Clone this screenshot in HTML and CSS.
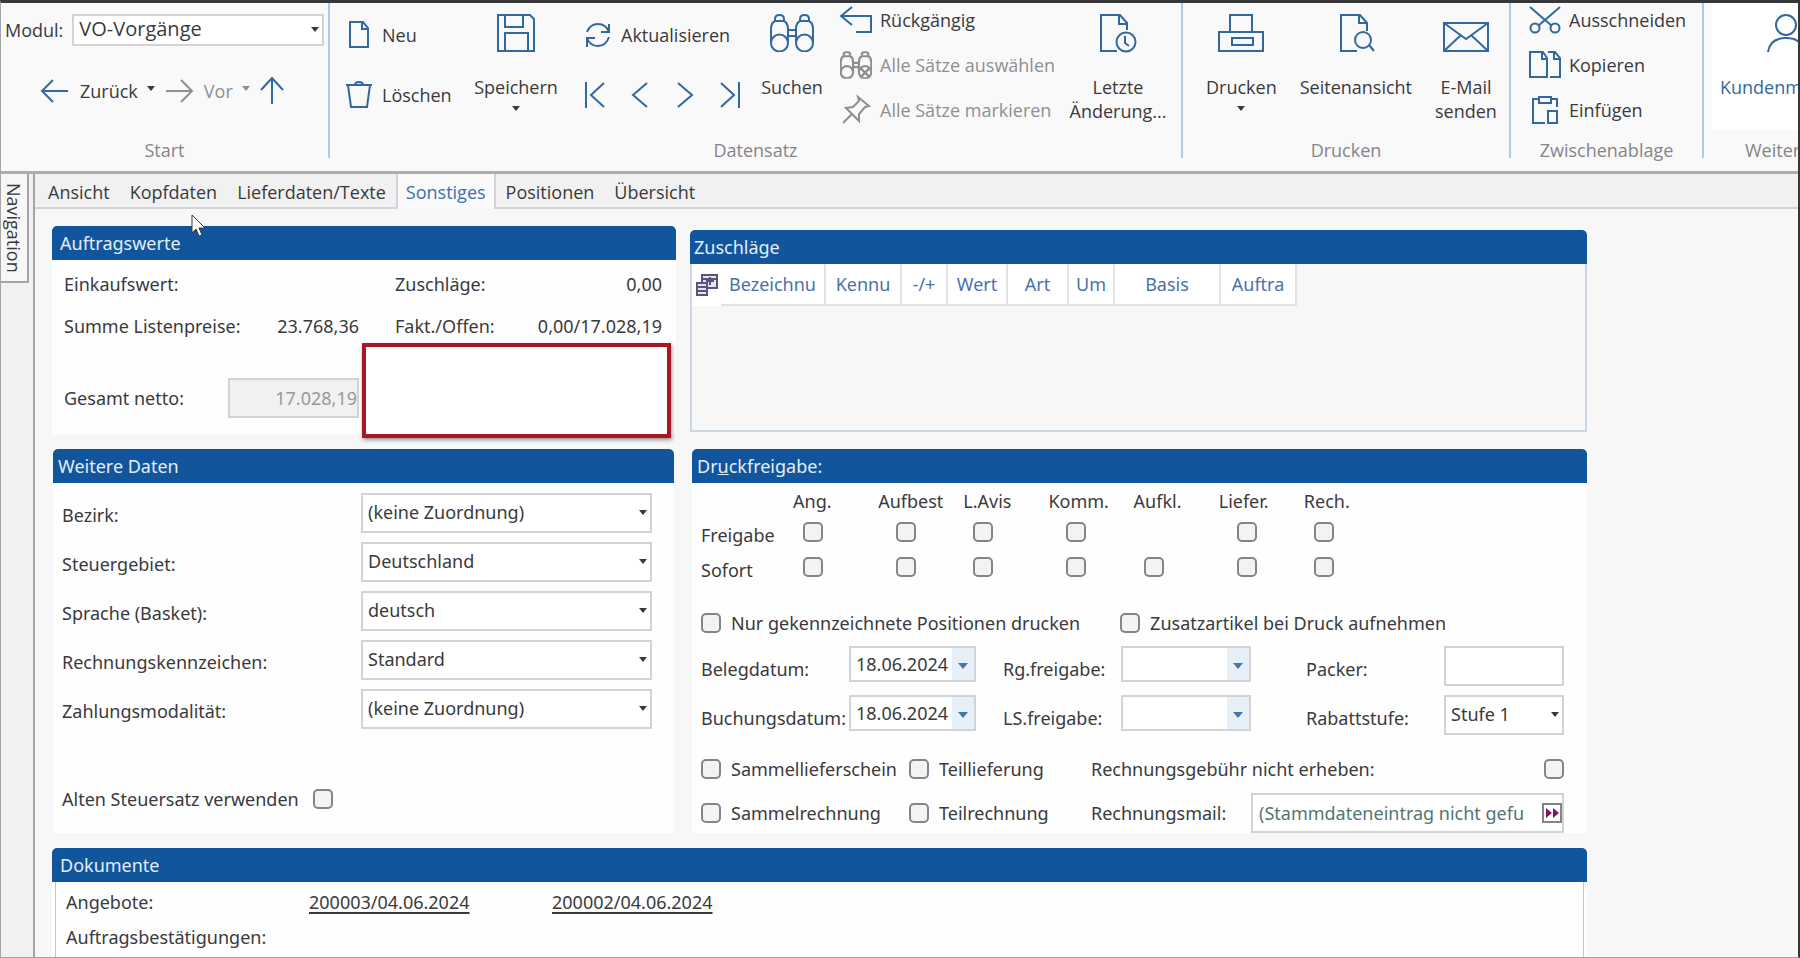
FILE: index.html
```html
<!DOCTYPE html>
<html lang="de">
<head>
<meta charset="utf-8">
<title>VO-Vorgänge</title>
<link rel="stylesheet" href="styles.css">
</head>
<body>
<svg class="defs" aria-hidden="true">
  <defs>
    <symbol id="binoculars" viewBox="0 0 44 38">
      <circle cx="9.500" cy="29" r="8.500"/><circle cx="34.500" cy="29" r="8.500"/>
      <path d="M1 28V15Q1 9 5 7h9q4 2 4 8v13M26 28V15q0-6 4-8h9q4 2 4 8v13M5 7V5q0-4 4.500-4T14 5v2M30 7V5q0-4 4.500-4T39 5v2M18 16h8M18 22h8"/>
    </symbol>
  </defs>
</svg>
<div class="window">
  <header class="ribbon">
    <section class="group group-start">
      <div class="group-body">
        <div class="module-row">
          <label for="modul">Modul:</label>
          <span class="combo"><select id="modul"><option>VO-Vorgänge</option></select></span>
        </div>
        <div class="history-row">
          <button class="tool"><svg width="28" height="24" viewBox="0 0 28 24"><path d="M27 12H1M12 1L1 12l11 11"/></svg>Zurück<i class="caret"></i></button>
          <button class="tool muted"><svg width="28" height="24" viewBox="0 0 28 24"><path d="M1 12h26M16 1l11 11-11 11"/></svg>Vor<i class="caret"></i></button>
          <button class="tool" aria-label="Nach oben"><svg width="24" height="28" viewBox="0 0 24 28"><path d="M12 27V1M1 13L12 1l11 12"/></svg></button>
        </div>
      </div>
      <h2 class="group-title">Start</h2>
    </section>

    <section class="group group-data">
      <div class="group-body">
        <div class="stack new-delete">
          <button class="tool"><svg width="26" height="28" viewBox="0 0 26 28"><path d="M4 1h13l5 6v19H4zM16 1v7h6"/></svg>Neu</button>
          <button class="tool"><svg width="26" height="28" viewBox="0 0 26 28"><path d="M0 4h26M9 4q0-3 4-3t4 3M2 4l3 22h16l3-22"/></svg>Löschen</button>
        </div>
        <button class="big save"><svg width="38" height="38" viewBox="0 0 38 38"><path d="M1 1h32l4 4v32H1zM8 1v12h18V1M8 37V19h23v18M8 19v18"/></svg><span>Speichern</span><i class="caret"></i></button>
        <div class="stack refresh-nav">
          <button class="tool"><svg width="26" height="28" viewBox="0 0 26 28"><path d="M2 11Q5 3 13 3t11 8M24 3v8h-8M24 16q-3 9-11 9T2 17M2 26v-9h8"/></svg>Aktualisieren</button>
          <div class="record-nav">
            <button class="tool" aria-label="Erster"><svg width="20" height="28" viewBox="0 0 20 28"><path d="M1 1v26M19 2L6 14l13 12"/></svg></button>
            <button class="tool" aria-label="Voriger"><svg width="20" height="28" viewBox="0 0 20 28"><path d="M17 2L3 14l14 12"/></svg></button>
            <button class="tool" aria-label="Nächster"><svg width="20" height="28" viewBox="0 0 20 28"><path d="M3 2l14 12L3 26"/></svg></button>
            <button class="tool" aria-label="Letzter"><svg width="20" height="28" viewBox="0 0 20 28"><path d="M1 2l13 12L1 26M19 1v26"/></svg></button>
          </div>
        </div>
        <button class="big search"><svg width="44" height="38"><use href="#binoculars"/></svg><span>Suchen</span></button>
        <div class="triple">
          <button class="tool"><svg width="32" height="28" viewBox="0 0 32 28"><path d="M12 1L1 10l11 9M1 10h30v16H16"/></svg>Rückgängig</button>
          <button class="tool muted"><svg width="32" height="28" viewBox="0 0 44 38" class="heavy"><use href="#binoculars"/><path d="M29 24l11 11M40 24L29 35"/></svg>Alle Sätze auswählen</button>
          <button class="tool muted"><svg width="32" height="28" viewBox="0 0 32 28"><path d="M18 1l11 9-4 1-6 7v7L6 12l7-1 6-6zM12 18l-9 9"/></svg>Alle Sätze markieren</button>
        </div>
        <button class="big last"><svg width="38" height="38" viewBox="0 0 38 38"><path d="M18 37H2V1h19l7 8v7M20 1v9h8"/><circle cx="27" cy="28" r="9.500"/><path d="M26 22v7l4 3"/></svg><span>Letzte<br>Änderung...</span></button>
      </div>
      <h2 class="group-title">Datensatz</h2>
    </section>

    <section class="group group-print">
      <div class="group-body">
        <button class="big"><svg width="46" height="38" viewBox="0 0 46 38"><path d="M1 18h44v19H1zM12 18V1h22v17M14 24h21v7H14z"/></svg><span>Drucken</span><i class="caret"></i></button>
        <button class="big"><svg width="38" height="38" viewBox="0 0 38 38"><path d="M20 37H4V1h19l7 8v8M22 1v8h8"/><circle cx="26" cy="26" r="8"/><path d="M32 31l5 6"/></svg><span>Seitenansicht</span></button>
        <button class="big"><svg width="46" height="38" viewBox="0 0 46 38"><path d="M1 9h44v28H1zM1 9l22 16L45 9M1 37l17-16M45 37L28 21"/></svg><span>E-Mail<br>senden</span></button>
      </div>
      <h2 class="group-title">Drucken</h2>
    </section>

    <section class="group group-clip">
      <div class="group-body">
        <div class="triple">
          <button class="tool"><svg width="32" height="28" viewBox="0 0 32 28"><path d="M1 1l22 19M31 1L9 20"/><circle cx="6" cy="22" r="4.500"/><circle cx="26" cy="22" r="4.500"/></svg>Ausschneiden</button>
          <button class="tool"><svg width="32" height="28" viewBox="0 0 32 28"><path d="M1 1h13l4 6v19H1zM13 1v7h5M19 1h7l5 6v19H21M25 1v7h6"/></svg>Kopieren</button>
          <button class="tool"><svg width="32" height="28" viewBox="0 0 32 28"><path d="M16 27H4V3h6M22 3h6v8M10 1h12v6H10zM19 15h9v12h-9z"/></svg>Einfügen</button>
        </div>
      </div>
      <h2 class="group-title">Zwischenablage</h2>
    </section>

    <section class="group group-more">
      <div class="group-body">
        <button class="big customer"><svg width="38" height="38" viewBox="0 0 38 38"><circle cx="19" cy="11" r="10"/><path d="M1 38Q3 24 19 24t18 14"/></svg><span>Kundenmonitor</span></button>
      </div>
      <h2 class="group-title">Weiteres</h2>
    </section>
  </header>

  <div class="workspace">
    <aside class="sidebar"><button class="nav-tab">Navigation</button></aside>
    <main class="content">
      <nav class="tabs">
        <a href="#ansicht">Ansicht</a>
        <a href="#kopfdaten">Kopfdaten</a>
        <a href="#lieferdaten">Lieferdaten/Texte</a>
        <a href="#sonstiges" class="active" aria-current="page">Sonstiges</a>
        <a href="#positionen">Positionen</a>
        <a href="#uebersicht">Übersicht</a>
      </nav>

      <div class="panels">
        <section class="panel values">
          <h2>Auftragswerte</h2>
          <div class="values-grid">
            <span>Einkaufswert:</span><span></span><span class="second">Zuschläge:</span><output>0,00</output>
            <span>Summe Listenpreise:</span><output>23.768,36</output><span class="second">Fakt./Offen:</span><output>0,00/17.028,19</output>
            <label for="netto">Gesamt netto:</label><input id="netto" class="net" value="17.028,19" disabled>
          </div>
          <div class="highlight"></div>
        </section>

        <section class="panel surcharges">
          <h2>Zuschläge</h2>
          <div class="surcharge-body">
            <table>
              <thead><tr>
                <th class="c-icon"><svg width="24" height="24" viewBox="0 0 24 24"><path class="sheet" d="M7 2h15v13H7z"/><path d="M7 6h15M15 4v8M11 8h8"/><path class="sheet" d="M2 10h10v12H2z"/><path d="M2 14h10M2 18h10"/></svg></th>
                <th class="c-name">Bezeichnu</th><th class="c-code">Kennu</th><th class="c-sign">-/+</th><th class="c-value">Wert</th><th class="c-kind">Art</th><th class="c-um">Um</th><th class="c-basis">Basis</th><th class="c-order">Auftra</th>
              </tr></thead>
            </table>
          </div>
        </section>

        <section class="panel details">
          <h2>Weitere Daten</h2>
          <div class="details-body">
            <div class="field"><label for="bezirk">Bezirk:</label><span class="combo"><select id="bezirk"><option>(keine Zuordnung)</option></select></span></div>
            <div class="field"><label for="gebiet">Steuergebiet:</label><span class="combo"><select id="gebiet"><option>Deutschland</option></select></span></div>
            <div class="field"><label for="sprache">Sprache (Basket):</label><span class="combo"><select id="sprache"><option>deutsch</option></select></span></div>
            <div class="field"><label for="kennz">Rechnungskennzeichen:</label><span class="combo"><select id="kennz"><option>Standard</option></select></span></div>
            <div class="field"><label for="zahlung">Zahlungsmodalität:</label><span class="combo"><select id="zahlung"><option>(keine Zuordnung)</option></select></span></div>
            <label class="check old-tax">Alten Steuersatz verwenden<input type="checkbox"></label>
          </div>
        </section>

        <section class="panel release">
          <h2>Dr<u>u</u>ckfreigabe:</h2>
          <div class="release-body">
            <table class="matrix">
              <thead><tr><td></td><th>Ang.</th><th>Aufbest</th><th>L.Avis</th><th>Komm.</th><th>Aufkl.</th><th>Liefer.</th><th>Rech.</th></tr></thead>
              <tbody>
                <tr><th>Freigabe</th><td><input type="checkbox" aria-label="Freigabe Ang."></td><td class="in"><input type="checkbox" aria-label="Freigabe Aufbest"></td><td><input type="checkbox" aria-label="Freigabe L.Avis"></td><td class="in"><input type="checkbox" aria-label="Freigabe Komm."></td><td></td><td class="in"><input type="checkbox" aria-label="Freigabe Liefer."></td><td><input type="checkbox" aria-label="Freigabe Rech."></td></tr>
                <tr><th>Sofort</th><td><input type="checkbox" aria-label="Sofort Ang."></td><td class="in"><input type="checkbox" aria-label="Sofort Aufbest"></td><td><input type="checkbox" aria-label="Sofort L.Avis"></td><td class="in"><input type="checkbox" aria-label="Sofort Komm."></td><td><input type="checkbox" aria-label="Sofort Aufkl."></td><td class="in"><input type="checkbox" aria-label="Sofort Liefer."></td><td><input type="checkbox" aria-label="Sofort Rech."></td></tr>
              </tbody>
            </table>
            <div class="print-options">
              <label class="check"><input type="checkbox">Nur gekennzeichnete Positionen drucken</label>
              <label class="check"><input type="checkbox">Zusatzartikel bei Druck aufnehmen</label>
            </div>
            <div class="dates">
              <label for="beleg">Belegdatum:</label>
              <span class="date"><input id="beleg" value="18.06.2024"><button aria-label="Kalender"><i class="caret"></i></button></span>
              <label for="rgfrei">Rg.freigabe:</label>
              <span class="date"><input id="rgfrei"><button aria-label="Kalender"><i class="caret"></i></button></span>
              <label for="packer">Packer:</label>
              <input id="packer" class="text">
              <label for="buchung">Buchungsdatum:</label>
              <span class="date"><input id="buchung" value="18.06.2024"><button aria-label="Kalender"><i class="caret"></i></button></span>
              <label for="lsfrei">LS.freigabe:</label>
              <span class="date"><input id="lsfrei"><button aria-label="Kalender"><i class="caret"></i></button></span>
              <label for="rabatt">Rabattstufe:</label>
              <span class="combo"><select id="rabatt"><option>Stufe 1</option></select></span>
            </div>
            <div class="invoice">
              <label class="check"><input type="checkbox">Sammellieferschein</label>
              <label class="check"><input type="checkbox">Teillieferung</label>
              <label class="check fee">Rechnungsgebühr nicht erheben:<input type="checkbox"></label>
              <label class="check"><input type="checkbox">Sammelrechnung</label>
              <label class="check"><input type="checkbox">Teilrechnung</label>
              <div class="mail">
                <label for="mail">Rechnungsmail:</label>
                <span class="mail-box"><input id="mail" value="(Stammdateneintrag nicht gefu"><button aria-label="Öffnen"><svg width="14" height="12" viewBox="0 0 14 12"><path d="M1 1l6 5-6 5zM8 1l6 5-6 5z"/></svg></button></span>
              </div>
            </div>
          </div>
        </section>

        <section class="panel documents">
          <h2>Dokumente</h2>
          <div class="documents-body">
            <span>Angebote:</span><a href="#200003">200003/04.06.2024</a><a href="#200002">200002/04.06.2024</a>
            <span class="row-start">Auftragsbestätigungen:</span>
          </div>
        </section>
      </div>
    </main>
  </div>
  <svg class="pointer" width="15" height="24" viewBox="0 0 15 24"><path d="M1 1v18l4-4 3 7 3-1-3-7h6z"/></svg>
</div>
</body>
</html>
```

FILE: styles.css
```css
* { box-sizing: border-box; }

body {
  margin: 0;
  font-family: "Open Sans", "Noto Sans", sans-serif;
  font-size: 18px;
  line-height: 24px;
  color: #3a3a3d;
  background: #f7f7f7;
}

button, input, select {
  font: inherit;
  color: inherit;
  margin: 0;
  padding: 0;
  border: 0;
  border-radius: 0;
  background: none;
  white-space: nowrap;
}

h2 { margin: 0; font-size: inherit; font-weight: 400; }
svg { fill: none; stroke: #33689f; stroke-width: 2; flex: none; overflow: visible; }
.defs { position: absolute; width: 0; height: 0; }

.window {
  position: relative;
  display: flex;
  flex-direction: column;
  height: 100vh;
  overflow: hidden;
  border: solid #37373a;
  border-width: 3px 2px 0 0;
  border-bottom: 1px solid #a5a5a9;
  border-left: 1px solid #a5a5a9;
}

.caret {
  display: inline-block;
  flex: none;
  border: solid transparent;
  border-width: 5px 4px 0;
  border-top-color: currentColor;
}

/* Ribbon */
.ribbon {
  display: flex;
  flex: none;
  height: 171px;
  overflow: hidden;
  border-bottom: 3px solid #adadb0;
  background: #f9f9f9;
}
.group {
  display: flex;
  flex: none;
  flex-direction: column;
  height: 155px;
  border-right: 2px solid #b3c8e2;
}
.group-body { display: flex; flex: 1; }
.group-title { line-height: 16px; text-align: center; color: #858589; }

.tool { display: flex; align-items: center; gap: 10px; height: 28px; white-space: nowrap; }
.muted { color: #8f8f93; }
.muted svg { stroke: #8f8f93; }
.heavy { stroke-width: 3; }

.big { display: flex; flex-direction: column; align-items: center; padding-top: 11px; }
.big span { margin-top: 23px; line-height: 24px; }
.big .caret { margin-top: 7px; }

.stack { display: flex; flex-direction: column; gap: 32px; padding-top: 18px; }
.triple { display: flex; flex-direction: column; gap: 17px; padding-top: 3px; }
.triple .tool { gap: 8px; }

.group-start { width: 329px; }
.group-start .group-body { flex-direction: column; gap: 31px; padding: 11px 4px 0; }
.module-row { display: flex; align-items: center; gap: 9px; }
.module-row .combo { flex: 1; height: 32px; }
.module-row select { padding-left: 7px; border-color: #a5a5a9; font-size: 20px; }
.history-row { display: flex; align-items: center; gap: 10px; padding-left: 36px; }
.history-row .tool { gap: 11px; }
.history-row .caret { margin: -6px 0 0 -2px; }

.group-data { width: 853px; }
.group-data .group-body { padding-left: 16px; }
.new-delete { width: 128px; }
.save { width: 84px; }
.refresh-nav { width: 202px; padding-left: 27px; }
.record-nav { display: flex; gap: 25px; }
.search { width: 64px; }
.triple { margin-left: 16px; }
.last { width: 98px; margin-left: auto; margin-right: 14px; }

.group-print { width: 328px; }
.group-print .group-body { gap: 23px; padding-left: 23px; }
.group-clip { width: 193px; }
.group-clip .triple { margin-left: 18px; }
.group-more { width: 190px; border: 0; padding-left: 8px; }
.group-more .group-body { flex: none; height: 127px; margin-bottom: 12px; background: #fff; color: #33689f; }
.group-more .group-title { padding-left: 33px; text-align: left; }
.customer { padding-left: 8px; }

/* Combo boxes */
.combo { position: relative; display: flex; height: 40px; }
.combo::after {
  content: "";
  position: absolute;
  top: 50%;
  right: 5px;
  margin-top: -3px;
  border: solid transparent;
  border-width: 5px 4px 0;
  border-top-color: #3a3a3d;
}
.combo select {
  width: 100%;
  padding: 0 20px 2px 5px;
  appearance: none;
  border: 2px solid #d3d3d7;
  background: #fff;
}

input[type="checkbox"] {
  flex: none;
  width: 20px;
  height: 20px;
  appearance: none;
  border: 2px solid #858589;
  border-radius: 5px;
  background: #f3f3f3;
}
.check { display: flex; align-items: center; gap: 10px; white-space: nowrap; }

/* Workspace */
.workspace { display: flex; flex: 1; min-height: 0; }
.sidebar { flex: none; width: 32px; background: #f1f1f1; }
.nav-tab {
  width: 28px;
  height: 109px;
  writing-mode: vertical-rl;
  border: 2px solid #a5a5a9;
  border-width: 0 2px 2px 0;
  background: #f7f7f7;
}
.content {
  display: flex;
  flex: 1;
  flex-direction: column;
  min-width: 0;
  border-left: 2px solid #a5a5a9;
}
.tabs {
  display: flex;
  flex: none;
  height: 35px;
  padding-left: 3px;
  border-bottom: 2px solid #d3d3d7;
  background: #f1f1f1;
}
.tabs a { padding: 6px 10px 0; color: inherit; text-decoration: none; }
.tabs .active {
  height: 35px;
  border: solid #d3d3d7;
  border-width: 0 2px;
  padding: 6px 8px 0;
  background: #f9f9f9;
  color: #3a70b4;
}

.panels {
  display: grid;
  flex: 1;
  grid-template-columns: 624fr 897fr;
  grid-template-rows: 208px auto 1fr;
  gap: 15px 14px;
  padding: 17px 211px 0 17px;
  font-family: "Noto Sans", "Open Sans", sans-serif;
}
.panel { display: flex; flex-direction: column; min-width: 0; background: #fefefe; }
.panel > h2 {
  flex: none;
  height: 34px;
  padding: 5px 8px;
  border-radius: 5px 5px 0 0;
  background: #11559d;
  color: #e3edf7;
}

/* Order values */
.values { position: relative; }
.values-grid {
  display: grid;
  grid-template-columns: 164px 131px 1fr auto;
  grid-template-rows: 48px 36px auto;
  align-items: center;
  padding: 0 14px 0 12px;
}
.values-grid > span { white-space: nowrap; }
.values-grid output { text-align: right; }
.second { padding-left: 36px; }
.values-grid .net {
  height: 40px;
  margin: 34px 0 0;
  border: 2px solid #d3d3d7;
  background: #f1f1f1;
  color: #98989c;
  text-align: right;
}
.values-grid label { padding-top: 34px; }
.highlight {
  position: absolute;
  right: 5px;
  bottom: -4px;
  width: 309px;
  height: 95px;
  border: 4px solid #a81722;
  background: #fff;
  box-shadow: 1px 2px 4px #00000066;
}

/* Surcharges */
.surcharges { margin: 4px 0 2px; }
.surcharges > h2 { padding-left: 4px; }
.surcharge-body { flex: 1; border: 2px solid #cad6e2; border-top: 0; background: #f7f7f7; }
.surcharge-body table { border-collapse: collapse; table-layout: fixed; width: 605px; background: #fff; }
.surcharge-body th {
  height: 41px;
  padding: 0;
  border: solid #e3e3e6;
  border-width: 0 2px 2px 0;
  color: #4a72a8;
  font-weight: 400;
}
.surcharge-body .c-icon { width: 29px; border: 0; }
.surcharge-body svg { display: block; margin: auto; stroke: #5b5480; }
.sheet { fill: #e6e3f0; }
.c-name { width: 104px; }
.c-code { width: 76px; }
.c-sign { width: 46px; }
.c-value { width: 60px; }
.c-kind { width: 61px; }
.c-um { width: 46px; }
.c-basis { width: 106px; }

/* Further data */
.details { margin: 0 2px 0 1px; }
.details > h2 { padding-left: 5px; }
.details-body { display: flex; flex-direction: column; gap: 9px; padding: 10px 22px 16px 9px; }
.field { display: grid; grid-template-columns: 299px 1fr; }
.field label { padding-top: 10px; }
.old-tax { margin-top: 49px; }
.details .old-tax { gap: 14px; }

/* Print release */
.release { margin-left: 2px; }
.release > h2 { padding-left: 5px; }
.release-body { display: flex; flex-direction: column; padding: 4px 23px 0 9px; }
.matrix { width: 688px; border-collapse: collapse; table-layout: fixed; }
.matrix th { padding: 0; font-weight: 400; text-align: left; }
.matrix tbody th { padding-top: 6px; }
.matrix td { padding: 0 0 0 10px; }
.matrix .in { padding-left: 18px; }
.matrix thead td { width: 92px; }
.matrix thead tr { height: 27px; }
.matrix tbody tr { height: 35px; }
.matrix input { display: block; }
.print-options { display: flex; gap: 40px; margin-top: 27px; }
.dates {
  display: grid;
  grid-template-columns: 148px 127px 145px 130px 193px minmax(0, 1fr);
  row-gap: 9px;
  margin-top: 11px;
}
.dates label { padding-top: 11px; white-space: nowrap; }
.dates label:nth-of-type(3n + 2) { padding-left: 27px; }
.dates label:nth-of-type(3n) { padding-left: 55px; }
.date { display: flex; height: 36px; border: 2px solid #d3d3d7; background: #fff; }
.date input { flex: 1; min-width: 0; padding-left: 5px; }
.date button { flex: none; width: 22px; background: #e6f0f9; color: #4677a0; }
.date .caret { border-width: 6px 5px 0; vertical-align: middle; }
.text { height: 40px; border: 2px solid #d3d3d7; background: #fff; }
.invoice {
  display: grid;
  grid-template-columns: 208px 182px 1fr;
  align-items: center;
  row-gap: 4px;
  margin-top: 14px;
}
.invoice .check { height: 40px; }
.invoice .fee { justify-content: space-between; }
.mail { display: grid; grid-template-columns: 160px 1fr; align-items: center; }
.mail-box { display: flex; align-items: center; height: 40px; border: 2px solid #d3d3d7; background: #fff; }
.mail-box input { flex: 1; min-width: 0; padding-left: 6px; color: #55756f; }
.mail-box button { display: flex; flex: none; align-items: center; justify-content: center; width: 20px; height: 20px; border: 2px solid #858589; }
.mail-box svg { fill: #85175c; stroke: none; }

/* Documents */
.documents { grid-column: 1 / -1; }
.documents-body {
  display: grid;
  flex: 1;
  grid-template-columns: 243px 243px 1fr;
  align-content: start;
  row-gap: 11px;
  margin: 0 3px;
  padding: 8px 10px 0;
  border: solid #b3c8e2;
  border-width: 0 1px;
}
.documents-body a { color: inherit; text-underline-offset: 3px; text-decoration-thickness: 2px; }
.row-start { grid-column: 1; }

.pointer { position: absolute; left: 190px; top: 211px; fill: #fff; stroke: #3a3a3d; stroke-width: 1; }
```
